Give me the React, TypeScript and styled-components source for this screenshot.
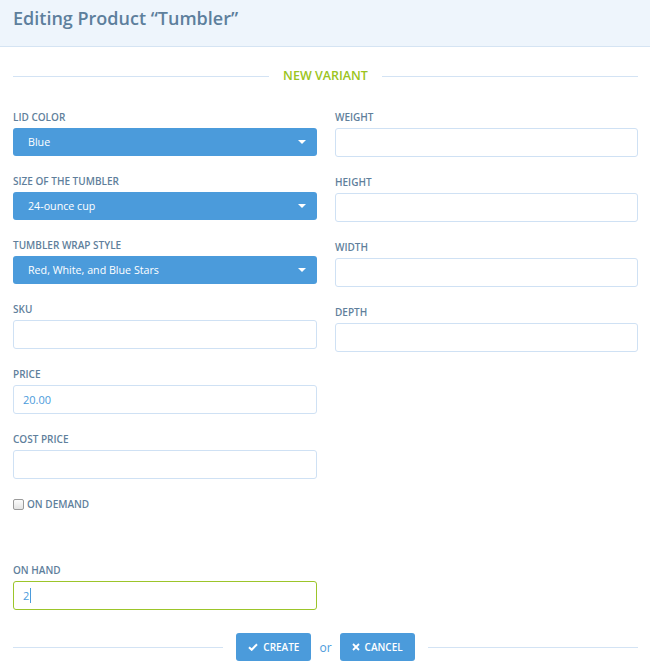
import React from "react";
import styled, { createGlobalStyle, css } from "styled-components";

const Global = createGlobalStyle`
  html, body { margin: 0; padding: 0; background: #fff; }
  body { font-family: "Open Sans", "Noto Sans", sans-serif; color: #56789a; }
  * { box-sizing: border-box; }
`;

const Header = styled.header`
  height: 47px;
  background: #eef5fc;
  border-bottom: 1px solid #d5e4f3;
  padding: 6px 13px 0;
`;

const Title = styled.h1`
  margin: 0;
  font-size: 18px;
  line-height: 24px;
  font-weight: 600;
  color: #5d7f9c;
`;

const Content = styled.div`
  padding: 0 12px 0 13px;
`;

const Divider = styled.div<{ $top: number; $bottom: number }>`
  display: flex;
  align-items: center;
  gap: 14px;
  margin-top: ${(p) => p.$top}px;
  margin-bottom: ${(p) => p.$bottom}px;
  &::before, &::after {
    content: "";
    flex: 1;
    height: 1px;
    background: #d3e3f4;
  }
`;

const SectionTitle = styled.span`
  color: #9bc420;
  font-size: 12.5px;
  font-weight: 600;
  line-height: 20px;
  text-transform: uppercase;
`;

const Columns = styled.div`
  display: grid;
  grid-template-columns: 304px 1fr;
  column-gap: 18px;
  align-items: start;
`;

const Column = styled.div`
  display: flex;
  flex-direction: column;
`;

const Field = styled.div<{ $gap?: number; $height?: number }>`
  display: flex;
  flex-direction: column;
  margin-bottom: ${(p) => (p.$gap ?? 18)}px;
  ${(p) => p.$height && css`height: ${p.$height}px;`}
`;

const Label = styled.label`
  font-size: 10px;
  font-weight: 600;
  line-height: 15px;
  text-transform: uppercase;
  color: #5f7f9c;
  margin-bottom: 3px;
  display: flex;
  align-items: center;
`;

const SelectBox = styled.div`
  height: 28px;
  background: #4b9bdb;
  border-radius: 3px;
  color: #fff;
  font-size: 10.7px;
  padding: 0 15px 0 15px;
  display: flex;
  align-items: center;
  justify-content: space-between;
`;

const Caret = styled.span`
  width: 0;
  height: 0;
  border-left: 4px solid transparent;
  border-right: 4px solid transparent;
  border-top: 4px solid #fff;
  margin-right: -4px;
`;

const Input = styled.div<{ $active?: boolean }>`
  height: 29px;
  border: 1px solid ${(p) => (p.$active ? "#9cc52a" : "#cfe1f4")};
  border-radius: 3px;
  background: #fff;
  font-size: 11px;
  color: #4b9bdb;
  padding: 0 9px;
  display: flex;
  align-items: center;
`;

const Cursor = styled.span`
  display: inline-block;
  width: 1px;
  height: 15px;
  background: #4b9bdb;
  margin-left: 1px;
`;

const CheckBox = styled.span`
  width: 11px;
  height: 11px;
  border: 1px solid #9a9a9a;
  border-radius: 2px;
  background: linear-gradient(#fcfcfc, #e4e4e4);
  margin-right: 3px;
  display: inline-block;
`;

const Footer = styled.div`
  display: flex;
  align-items: center;
  margin-top: 23px;
  &::before, &::after {
    content: "";
    flex: 1;
    height: 1px;
    background: #d3e3f4;
  }
`;

const Actions = styled.div`
  display: flex;
  align-items: center;
  margin: 0 13px;
`;

const Button = styled.button`
  height: 28px;
  border: none;
  border-radius: 3px;
  background: #4b9bdb;
  color: #fff;
  font-family: inherit;
  font-size: 10px;
  font-weight: 600;
  text-transform: uppercase;
  padding: 0 12px;
  display: flex;
  align-items: center;
  gap: 5px;
`;

const Or = styled.span`
  font-size: 12px;
  color: #4b9bdb;
  margin: 0 8px;
`;

const selects = [
  { label: "Lid Color", value: "Blue" },
  { label: "Size of the Tumbler", value: "24-ounce cup" },
  { label: "Tumbler Wrap Style", value: "Red, White, and Blue Stars" },
];

const rightFields = ["Weight", "Height", "Width", "Depth"];

export default function App() {
  return (
    <>
      <Global />
      <Header>
        <Title>Editing Product “Tumbler”</Title>
      </Header>
      <Content>
        <Divider $top={19} $bottom={24}>
          <SectionTitle>New Variant</SectionTitle>
        </Divider>
        <Columns>
          <Column>
            {selects.map((s) => (
              <Field key={s.label}>
                <Label>{s.label}</Label>
                <SelectBox>
                  <span>{s.value}</span>
                  <Caret />
                </SelectBox>
              </Field>
            ))}
            <Field>
              <Label>SKU</Label>
              <Input />
            </Field>
            <Field>
              <Label>Price</Label>
              <Input>20.00</Input>
            </Field>
            <Field>
              <Label>Cost Price</Label>
              <Input />
            </Field>
            <Field $height={48}>
              <Label>
                <CheckBox />
                On Demand
              </Label>
            </Field>
            <Field $gap={0}>
              <Label>On Hand</Label>
              <Input $active>
                2<Cursor />
              </Input>
            </Field>
          </Column>
          <Column>
            {rightFields.map((f) => (
              <Field key={f}>
                <Label>{f}</Label>
                <Input />
              </Field>
            ))}
          </Column>
        </Columns>
        <Footer>
          <Actions>
            <Button>
              <svg width="10" height="8" viewBox="0 0 10 8">
                <path d="M1 4.2 L3.7 6.8 L9 1.2" stroke="#fff" strokeWidth="2" fill="none" />
              </svg>
              Create
            </Button>
            <Or>or</Or>
            <Button>
              <svg width="8" height="8" viewBox="0 0 8 8">
                <path d="M1 1 L7 7 M7 1 L1 7" stroke="#fff" strokeWidth="1.8" fill="none" />
              </svg>
              Cancel
            </Button>
          </Actions>
        </Footer>
      </Content>
    </>
  );
}
